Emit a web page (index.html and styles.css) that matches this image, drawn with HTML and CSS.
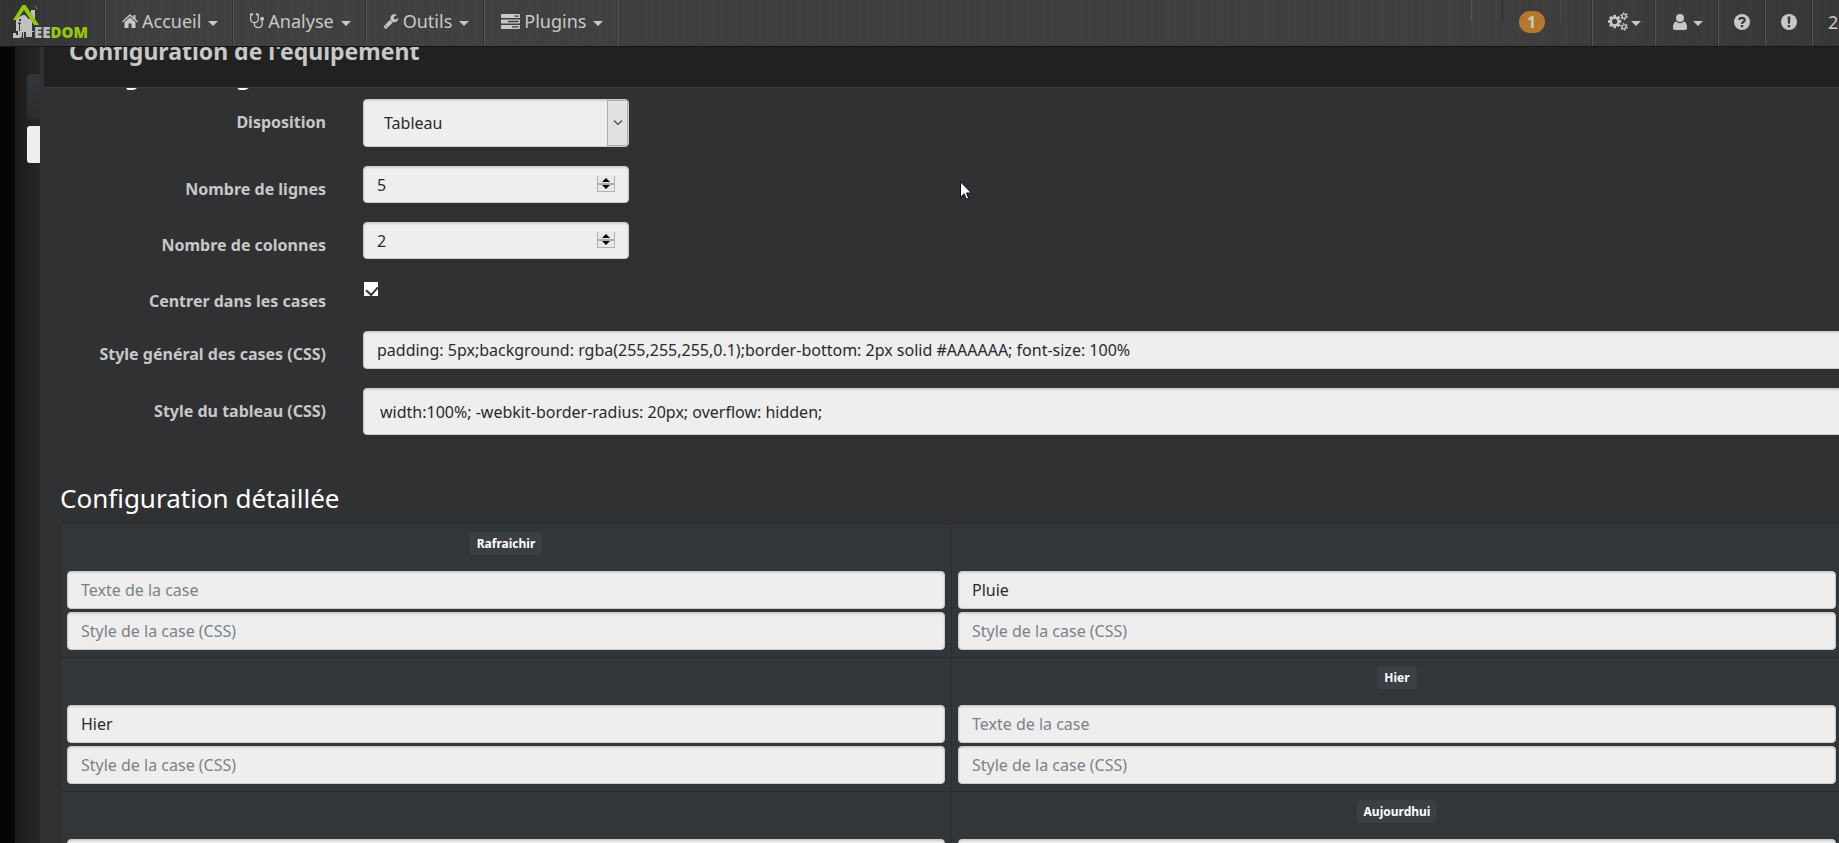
FILE: index.html
```html
<!DOCTYPE html>
<html lang="fr">
<head>
<meta charset="utf-8">
<title>Jeedom</title>
<link rel="stylesheet" href="styles.css">
</head>
<body>
<header class="navbar">
  <a class="logo" href="#" aria-label="Jeedom">
    <svg width="28" height="36" viewBox="0 0 28 36" aria-hidden="true">
      <path fill="#c0c0c0" d="M19 6h4v14l-4-5zM11 11h2l7 8v9h-3v-1h-5v7h-1V15H5v-1zM10 27h12v1H10z"/>
      <path fill="#c0c0c0" d="M4 15h16v12H10v4q0 3-3 3H1v-5h3v2h2v-4H4z"/>
      <path fill="#333" d="M7 15h2v2H7zM6 18.500h3v1.200H8V27H7v-7H6z"/>
      <path fill="none" stroke="#8a8a8a" d="M23 2l2 3"/>
      <path fill="#93c90d" d="M1 16L10.500 1h3L27 21h-5L12 6 5 16z"/>
      <path fill="#c0c0c0" d="M14 27h6v6h-6z"/>
    </svg>
    <span class="logo-text">EE<b>DOM</b></span>
  </a>
  <nav class="menu">
    <a class="item" href="#">
      <svg class="icon" viewBox="0 0 16 16"><path d="M8 1L0 8.500l1 1L8 3l7 6.500 1-1-2.500-2.400V2h-2v2.200zM8 4.200L2.500 9.300V15H6.500v-4.500h3V15h4V9.300z"/></svg>
      <span>Accueil</span><i class="caret"></i>
    </a>
    <a class="item" href="#">
      <svg class="icon icon-narrow" viewBox="64 64 1408 1600"><path d="M1344 640q0 26-19 45t-45 19-45-19-19-45 19-45 45-19 45 19 19 45zm128 0q0 62-35.500 111t-92.500 70v395q0 159-131.500 271.500t-316.500 112.500-316.500-112.500-131.500-271.500v-132q-164-20-274-128t-110-252v-512q0-26 19-45t45-19q6 0 16 2 17-30 47-48t65-18q53 0 90.500 37.500t37.500 90.500-37.500 90.500-90.500 37.500q-33 0-64-18v402q0 106 94 181t226 75 226-75 94-181v-402q-31 18-64 18-53 0-90.500-37.500t-37.500-90.500 37.500-90.500 90.500-37.500q35 0 65 18t47 48q10-2 16-2 26 0 45 19t19 45v512q0 144-110 252t-274 128v132q0 106 94 181t226 75 226-75 94-181v-395q-57-21-92.500-70t-35.500-111q0-80 56-136t136-56 136 56 56 136z"/></svg>
      <span>Analyse</span><i class="caret"></i>
    </a>
    <a class="item" href="#">
      <svg class="icon" viewBox="0 0 1792 1792"><path d="M448 1472q0-26-19-45t-45-19-45 19-19 45 19 45 45 19 45-19 19-45zm644-420l-682 682q-37 37-90 37-52 0-91-37l-106-108q-38-36-38-90 0-53 38-91l681-681q39 98 114.500 173.500t173.500 114.500zm634-435q0 39-23 106-47 134-164.500 217.500t-258.500 83.500q-185 0-316.500-131.500t-131.500-316.500 131.500-316.500 316.500-131.500q58 0 121.500 16.500t107.500 46.500q16 11 16 28t-16 28l-293 169v224l193 107q5-3 79-48.500t135.500-81 70.500-35.500q15 0 23.500 10t8.500 25z"/></svg>
      <span>Outils</span><i class="caret"></i>
    </a>
    <a class="item" href="#">
      <svg class="icon icon-wide" viewBox="0 128 1792 1408"><path fill-rule="evenodd" d="M1024 1408h640v-128h-640zM640 896h1024v-128h-1024zM1280 384h384v-128h-384zM64 128h1664q64 0 64 64v256q0 64-64 64H64q-64 0-64-64V192q0-64 64-64zM64 640h1664q64 0 64 64v256q0 64-64 64H64q-64 0-64-64V704q0-64 64-64zM64 1152h1664q64 0 64 64v256q0 64-64 64H64q-64 0-64-64v-256q0-64 64-64z"/></svg>
      <span>Plugins</span><i class="caret"></i>
    </a>
  </nav>
  <div class="tools">
    <span class="stub stub-first"></span>
    <span class="stub stub-dark"></span>
    <a class="count" href="#"><span>1</span></a>
    <span class="stub stub-last"></span>
    <a class="tool tool-gears" href="#" aria-label="Réglages">
      <svg class="icon icon-gears" viewBox="0 0 1920 1792"><path d="M896 896q0-106-75-181t-181-75-181 75-75 181 75 181 181 75 181-75 75-181zm384-91v185q0 10-7 19.500t-16 10.500l-155 24q-11 35-32 76 34 48 90 115 7 11 7 20 0 12-7 19-23 30-82.500 89.500t-78.500 59.500q-11 0-21-7l-115-90q-37 19-77 31-11 108-23 155-7 24-30 24h-186q-11 0-20-7.500t-10-17.500l-23-153q-34-10-75-31l-118 89q-7 7-20 7-11 0-21-8-144-133-144-160 0-9 7-19 10-14 41-53t47-61q-23-44-35-82l-152-24q-10-1-17-9.500t-7-19.500v-185q0-10 7-19.500t16-10.500l155-24q11-35 32-76-34-48-90-115-7-11-7-20 0-12 7-20 22-30 82-89t79-59q11 0 21 7l115 90q34-18 77-32 11-108 23-154 7-24 30-24h186q11 0 20 7.500t10 17.500l23 153q34 10 75 31l118-89q8-7 20-7 11 0 21 8 144 133 144 160 0 8-7 19-12 16-42 54t-45 60q23 48 34 82l152 23q10 2 17 10.500t7 19.500z"/><g fill="none" stroke="currentColor"><circle cx="1536" cy="384" r="190" stroke-width="130"/><circle cx="1536" cy="384" r="310" stroke-width="130" stroke-dasharray="162 162.600"/><circle cx="1536" cy="1408" r="190" stroke-width="130"/><circle cx="1536" cy="1408" r="310" stroke-width="130" stroke-dasharray="162 162.600"/></g></svg><i class="caret"></i>
    </a>
    <a class="tool tool-user" href="#" aria-label="Utilisateur">
      <svg class="icon" viewBox="0 0 16 16"><circle cx="8" cy="4" r="4"/><path d="M4 7.500Q8 11 12 7.500q3 1 3 6Q15 16 13 16H3q-2 0-2-2.500 0-5 3-6z"/></svg><i class="caret"></i>
    </a>
    <a class="tool" href="#" aria-label="Aide">
      <svg class="icon" viewBox="0 0 16 16"><circle cx="8" cy="8" r="8"/><path fill="none" stroke="#383838" stroke-width="2.200" d="M5.300 6Q5.500 3.800 8 3.800T10.700 6Q10.700 7.300 9.300 8 8 8.500 8 10"/><path fill="#383838" d="M6.800 11h2.400v2.200H6.800z"/></svg>
    </a>
    <a class="tool" href="#" aria-label="Information">
      <svg class="icon" viewBox="0 0 16 16"><circle cx="8" cy="8" r="8"/><path fill="#383838" d="M6.600 2.500h2.800L9 9.700H7zM6.800 11h2.400v2.300H6.800z"/></svg>
    </a>
    <a class="tool clock" href="#">2</a>
  </div>
</header>

<div class="page">
  <aside class="backdrop">
    <div class="panel"></div>
    <div class="search"></div>
  </aside>
  <main class="dialog">
    <div class="titlebar"><h1>Configuration de l'équipement</h1></div>
    <div class="content">
      <h2>Configuration générale</h2>
      <form class="form">
        <label for="layout">Disposition</label>
        <div class="control select">
          <select id="layout" class="field"><option>Tableau</option></select>
          <span class="drop"><svg width="10" height="6" viewBox="0 0 10 6"><path d="M1 .5l4 4 4-4" fill="none" stroke="#444" stroke-width="1.200"/></svg></span>
        </div>
        <label for="rows">Nombre de lignes</label>
        <div class="control number">
          <input id="rows" class="field" type="number" value="5">
          <span class="spin"><i class="up"></i><i class="down"></i></span>
        </div>
        <label for="cols">Nombre de colonnes</label>
        <div class="control number">
          <input id="cols" class="field" type="number" value="2">
          <span class="spin"><i class="up"></i><i class="down"></i></span>
        </div>
        <label for="center">Centrer dans les cases</label>
        <div class="check"><input id="center" type="checkbox" checked></div>
        <label for="cellcss">Style général des cases (CSS)</label>
        <input id="cellcss" class="field" type="text" value="padding: 5px;background: rgba(255,255,255,0.1);border-bottom: 2px solid #AAAAAA; font-size: 100%">
        <label for="tablecss">Style du tableau (CSS)</label>
        <input id="tablecss" class="field field-tall" type="text" value="width:100%; -webkit-border-radius: 20px; overflow: hidden;">
      </form>
      <h2 class="detail">Configuration détaillée</h2>
      <table class="cells">
        <tr>
          <td><div class="slot"><span class="tag">Rafraichir</span></div><input class="field" type="text" placeholder="Texte de la case" aria-label="Texte de la case"><input class="field" type="text" placeholder="Style de la case (CSS)" aria-label="Style de la case"></td>
          <td><div class="slot"></div><input class="field" type="text" value="Pluie" aria-label="Texte de la case"><input class="field" type="text" placeholder="Style de la case (CSS)" aria-label="Style de la case"></td>
        </tr>
        <tr>
          <td><div class="slot"></div><input class="field" type="text" value="Hier" aria-label="Texte de la case"><input class="field" type="text" placeholder="Style de la case (CSS)" aria-label="Style de la case"></td>
          <td><div class="slot"><span class="tag">Hier</span></div><input class="field" type="text" placeholder="Texte de la case" aria-label="Texte de la case"><input class="field" type="text" placeholder="Style de la case (CSS)" aria-label="Style de la case"></td>
        </tr>
        <tr>
          <td><div class="slot"></div><input class="field" type="text" aria-label="Texte de la case"></td>
          <td><div class="slot"><span class="tag">Aujourdhui</span></div><input class="field" type="text" aria-label="Texte de la case"></td>
        </tr>
      </table>
    </div>
  </main>
</div>
<svg class="pointer" width="12" height="19" viewBox="0 0 12 19" aria-hidden="true"><path d="M.5.800v15.500l3.600-3.500 2.300 5.400 2.300-1-2.300-5.200h5z" fill="#fff" stroke="#0b0d1c"/></svg>
</body>
</html>
```
FILE: styles.css
```css
* { box-sizing: border-box; }

body {
  margin: 0;
  height: 100vh;
  overflow: hidden;
  background: #050505;
  color: #c8c8c8;
  font: 16px/24px "Noto Sans", sans-serif;
}

a { color: inherit; text-decoration: none; }

/* top bar */
.navbar {
  position: fixed;
  top: 0;
  left: 0;
  right: 0;
  z-index: 2;
  display: flex;
  height: 47px;
  overflow: hidden;
  border-bottom: 1px solid #151515;
  background:
    repeating-linear-gradient(90deg, rgba(255,255,255,.012) 0 3px, transparent 3px 11px, rgba(0,0,0,.03) 11px 14px, transparent 14px 23px),
    linear-gradient(90deg, #333 0, #3e3e3e 8%, #3f3f3f 80%, #383838);
}

.logo {
  display: flex;
  flex: none;
  align-items: flex-end;
  width: 105px;
  padding: 0 0 6px 12px;
}

.logo svg { margin-right: -6px; }

.logo-text {
  z-index: 1;
  font: 800 15px/16px "Open Sans", sans-serif;
  color: #bdbdbd;
}

.logo-text b { font-weight: 800; color: #93c90d; }

.menu { display: flex; border-right: 1px solid #555; }

.item {
  display: flex;
  align-items: center;
  gap: 4px;
  padding: 0 15px 4px 16px;
  border-left: 1px solid #555;
  box-shadow: -1px 0 #303030;
  background: rgba(255,255,255,.01);
  font-size: 18px;
}

.icon { width: 16px; height: 16px; fill: currentColor; flex: none; }
.icon-narrow { width: 14px; }
.icon-wide { width: 19px; height: 15px; }
.icon-gears { width: 20px; height: 19px; }

.caret {
  margin: 4px 0 0 3px;
  border: 5px solid transparent;
  border-top-color: currentColor;
  border-bottom: 0;
}

.tools { display: flex; margin-left: auto; flex: none; }

.stub { width: 1px; height: 21px; background: #555; }
.stub-first { margin-right: 30px; }
.stub-dark { background: #2b2b2b; }
.stub-last { margin-right: 31px; background: #4c4c4c; }

.count {
  display: flex;
  width: 57px;
  justify-content: center;
  padding-top: 11px;
}

.count span {
  width: 26px;
  height: 22px;
  border-radius: 11px;
  background: #b5782c;
  text-align: center;
  font: bold 16px/22px "Noto Sans", sans-serif;
}

.tool {
  display: flex;
  align-items: center;
  justify-content: center;
  width: 47px;
  padding-bottom: 3px;
  border-left: 1px solid #555;
  box-shadow: -1px 0 #303030;
  font-size: 18px;
}

.tool-gears { width: 63px; }
.tool-user { width: 63px; }
.tool-user .caret { margin-left: 5px; }
.clock { width: 27px; padding-left: 15px; justify-content: flex-start; }

/* area behind and beside the dialog */
.page { display: flex; height: 100%; }

.backdrop {
  flex: none;
  width: 40px;
  padding: 74px 0 0 12px;
  border-left: 15px solid #050505;
  background: linear-gradient(90deg, #1c1c1c, #262626);
}

.panel {
  height: 45px;
  margin-bottom: 7px;
  border-radius: 4px 0 0 4px;
  background: linear-gradient(#333638, #2a2c2e);
}

.search { height: 37px; border-radius: 3px 0 0 3px; background: #eee; }

.dialog {
  display: flex;
  flex: 1;
  flex-direction: column;
  min-width: 0;
  background: #303133;
}

.titlebar {
  flex: none;
  margin-left: 4px;
  padding: 35px 25px 20px;
  border-bottom: 1px solid #3a3a3a;
  background: #212121;
}

h1 { margin: 0; font-size: 23px; line-height: 32px; }

.content {
  flex: 1;
  margin-right: -4px;
  padding-left: 20px;
  overflow: hidden;
}

h2 {
  margin: -32px 0 7px;
  color: #fff;
  font-size: 26px;
  font-weight: normal;
  line-height: 36px;
}

.detail { margin-top: 45px; }

/* form */
.form {
  display: grid;
  grid-template-columns: 266px minmax(0, 1fr);
  gap: 19px 37px;
}

.form label {
  padding-top: 11px;
  font-weight: bold;
  text-align: right;
  height: 34px;
}

.field {
  display: block;
  width: 100%;
  height: 38px;
  margin: 0;
  padding: 0 13px;
  border: 1px solid #ccc;
  border-radius: 4px;
  background: #eee;
  box-shadow: inset 0 1px 2px rgba(0,0,0,.12);
  color: #272b30;
  font: 16px/24px "Noto Sans", sans-serif;
  appearance: none;
}

.field::placeholder { color: #7a8288; opacity: 1; }
.field-tall { height: 47px; padding: 0 16px; }

.control { position: relative; width: 266px; }
.select .field { height: 48px; padding: 0 20px; }
.number .field { height: 37px; appearance: textfield; }
.number .field::-webkit-inner-spin-button { display: none; }

.drop {
  position: absolute;
  top: 1px;
  right: 1px;
  bottom: 1px;
  display: flex;
  align-items: center;
  justify-content: center;
  width: 21px;
  border: 1px solid #acacac;
  background: #e1e1e1;
  pointer-events: none;
}

.spin {
  position: absolute;
  top: 10px;
  right: 14px;
  display: flex;
  flex-direction: column;
  align-items: center;
  justify-content: space-around;
  width: 18px;
  height: 16px;
  border: 1px solid #b0b0b0;
  border-top: 0;
  background: linear-gradient(#e8e8e8 7px, #acacac 7px 9px, #e8e8e8 9px);
  pointer-events: none;
}

.up, .down { border: 4px solid transparent; }
.up { border-top: 0; border-bottom-color: #000; }
.down { border-bottom: 0; border-top-color: #000; }

.check { height: 34px; padding: 4px 1px; }

.check input {
  display: block;
  width: 14px;
  height: 14px;
  margin: 0;
  padding: 2px 0 0 4px;
  background: #fff;
  appearance: none;
}

.check input:checked::before {
  content: "";
  display: block;
  width: 6px;
  height: 9px;
  border: solid #333;
  border-width: 0 2px 2px 0;
  transform: rotate(42deg);
}

/* cell table */
.cells {
  width: 100%;
  table-layout: fixed;
  border-collapse: collapse;
  background: #323638;
}

.cells td { padding: 8px 6px 7px; border: 1px solid #2b2c2e; }
.cells .field + .field { margin-top: 3px; }

.slot {
  display: flex;
  justify-content: center;
  height: 23px;
  margin-bottom: 16px;
}

.tag {
  padding: 0 7px;
  border-radius: 4px;
  background: #3a3f44;
  color: #fff;
  font-size: 12px;
  font-weight: bold;
  line-height: 23px;
}

.pointer { position: absolute; top: 181px; left: 960px; z-index: 3; }
```
